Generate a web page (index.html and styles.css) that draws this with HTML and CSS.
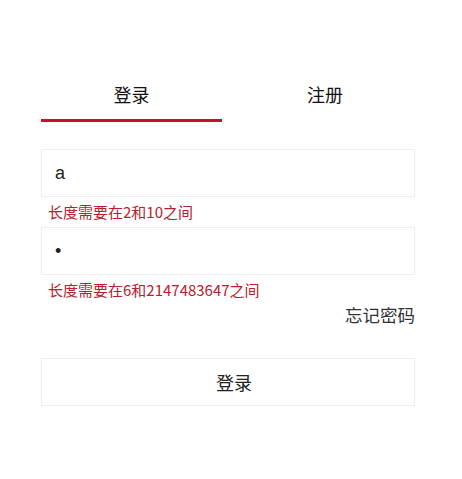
FILE: index.html
```html
<!DOCTYPE html>
<html lang="zh">
<head>
    <meta charset="UTF-8">
    <meta name="viewport" content="width=device-width, initial-scale=1.0">
    <title>登录</title>
    <link rel="stylesheet" href="styles.css">
</head>
<body>
    <div class="login-box">
        <div class="tabs">
            <div class="tab active">登录</div>
            <div class="tab">注册</div>
        </div>

        <div class="form">
            <div class="field">
                <input type="text" class="text-input" value="a">
                <div class="error">长度需要在2和10之间</div>
            </div>
            <div class="field">
                <input type="password" class="text-input" value="a">
                <div class="error">长度需要在6和2147483647之间</div>
            </div>
            <div class="forgot">忘记密码</div>
            <button class="submit">登录</button>
        </div>
    </div>
</body>
</html>
```

FILE: styles.css
```css
body {
    background-color: #ffffff;
    color: #222222;
    font-family: "Microsoft YaHei", "Noto Sans CJK SC", sans-serif;
    margin: 0;
    padding: 0;
}
.login-box {
    width: 374px;
    margin: 0 0 0 41px;
    padding-top: 76px;
}
.tabs {
    display: flex;
}
.tab {
    font-size: 18px;
    line-height: 36px;
    height: 46px;
    text-align: center;
    color: #111;
    box-sizing: border-box;
}
.tab:first-child {
    width: 181px;
}
.tab:last-child {
    flex: 1;
    padding-left: 13px;
}
.tab.active {
    border-bottom: 3px solid #c8102e;
}
.form {
    padding-top: 27px;
}
.text-input {
    display: block;
    width: 100%;
    height: 48px;
    box-sizing: border-box;
    border: 1px solid #eeeeee;
    padding: 0 13px;
    font-size: 18px;
    font-family: "Liberation Sans", Arial, sans-serif;
    color: #222;
    outline: none;
}
.error {
    color: #b8202e;
    font-size: 15px;
    line-height: 20px;
    padding: 5px 7px 5px;
}
.forgot {
    text-align: right;
    font-size: 17.5px;
    color: #333;
    line-height: 24px;
    margin-top: -2px;
}
.submit {
    display: block;
    width: 100%;
    height: 48px;
    margin-top: 31px;
    padding-left: 18px;
    background: #fff;
    border: 1px solid #eeeeee;
    font-size: 18px;
    color: #222;
    font-family: "Noto Sans CJK SC", sans-serif;
    cursor: pointer;
}
```
